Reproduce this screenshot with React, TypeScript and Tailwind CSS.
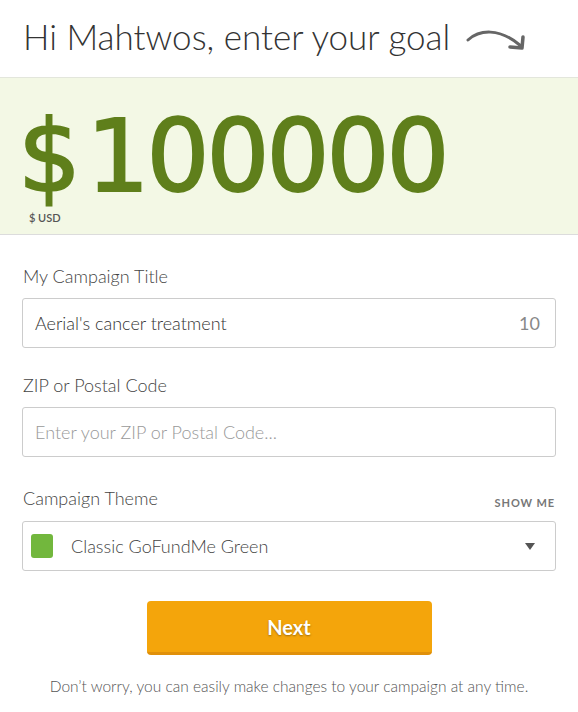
import React from "react";

const Arrow = () => (
  <svg width="62" height="26" viewBox="0 0 62 26" fill="none" className="ml-[15px] mt-[2px]">
    <path d="M3 13 C 14 3, 34 0, 56 19" stroke="#666" strokeWidth="3" strokeLinecap="round" />
    <path d="M45 20 L57 21 L58 10" stroke="#666" strokeWidth="3.5" strokeLinecap="round" strokeLinejoin="round" />
  </svg>
);

const App = () => {
  return (
    <div className="w-[578px] h-[712px] bg-white font-['Lato','Liberation_Sans',sans-serif] text-[#333]">
      <div className="h-[78px] flex items-center px-[23px] border-b border-[#e3e6dc]">
        <h1 className="text-[35px] font-light text-[#333] leading-none -mt-1">
          Hi Mahtwos, enter your goal
        </h1>
        <Arrow />
      </div>

      <div className="h-[157px] bg-[#f3f8e5] border-b border-[#dcdcdc] px-[18px] pt-[31px]">
        <div className="font-['DejaVu_Sans',sans-serif] text-[99px] leading-[96px] text-[#5f7f1b] tracking-[-3px] [word-spacing:-20px] [-webkit-text-stroke:2px_#5f7f1b]">
          $ 100000
        </div>
        <div className="ml-[11px] mt-[6px] text-[11px] leading-[14px] font-semibold text-[#555]">$ USD</div>
      </div>

      <div className="px-[22px] pt-[32px]">
        <label className="block text-[18px] font-light text-[#444] leading-none ml-[1px]">My Campaign Title</label>
        <div className="mt-[13px] h-[50px] border border-[#ccc] rounded-[3px] flex items-center justify-between px-[12px]">
          <span className="text-[18px] font-light text-[#333]">Aerial's cancer treatment</span>
          <span className="text-[18px] text-[#888] mr-[3px]">10</span>
        </div>

        <label className="block mt-[28px] text-[18px] font-light text-[#444] leading-none ml-[1px]">ZIP or Postal Code</label>
        <div className="mt-[13px] h-[50px] border border-[#ccc] rounded-[3px] flex items-center px-[12px]">
          <span className="text-[18px] font-light text-[#999]">Enter your ZIP or Postal Code...</span>
        </div>

        <div className="mt-[32px] flex items-end justify-between">
          <label className="block text-[18px] font-light text-[#444] leading-none ml-[1px]">Campaign Theme</label>
          <span className="text-[11px] font-bold tracking-[0.9px] text-[#777] mb-[-4px] mr-[1px]">SHOW ME</span>
        </div>
        <div className="mt-[14px] h-[50px] border border-[#ccc] rounded-[3px] flex items-center px-[8px]">
          <span className="w-[22px] h-[24px] rounded-[3px] bg-[#72b73d]" />
          <span className="ml-[18px] text-[18px] font-light text-[#444]">Classic GoFundMe Green</span>
          <span className="ml-auto mr-[12px] w-0 h-0 border-l-[5px] border-r-[5px] border-t-[7px] border-l-transparent border-r-transparent border-t-[#555]" />
        </div>

        <div className="flex justify-center mt-[30px]">
          <button className="w-[285px] h-[54px] rounded-[4px] bg-[#f4a50b] border-b-[3px] border-[#e0900a] text-white text-[20px] font-bold [text-shadow:0_1px_2px_rgba(0,0,0,0.35)]">
            Next
          </button>
        </div>

        <p className="mt-[20px] text-center text-[15.5px] font-light text-[#555]">
          Don’t worry, you can easily make changes to your campaign at any time.
        </p>
      </div>
    </div>
  );
};

export default App;
